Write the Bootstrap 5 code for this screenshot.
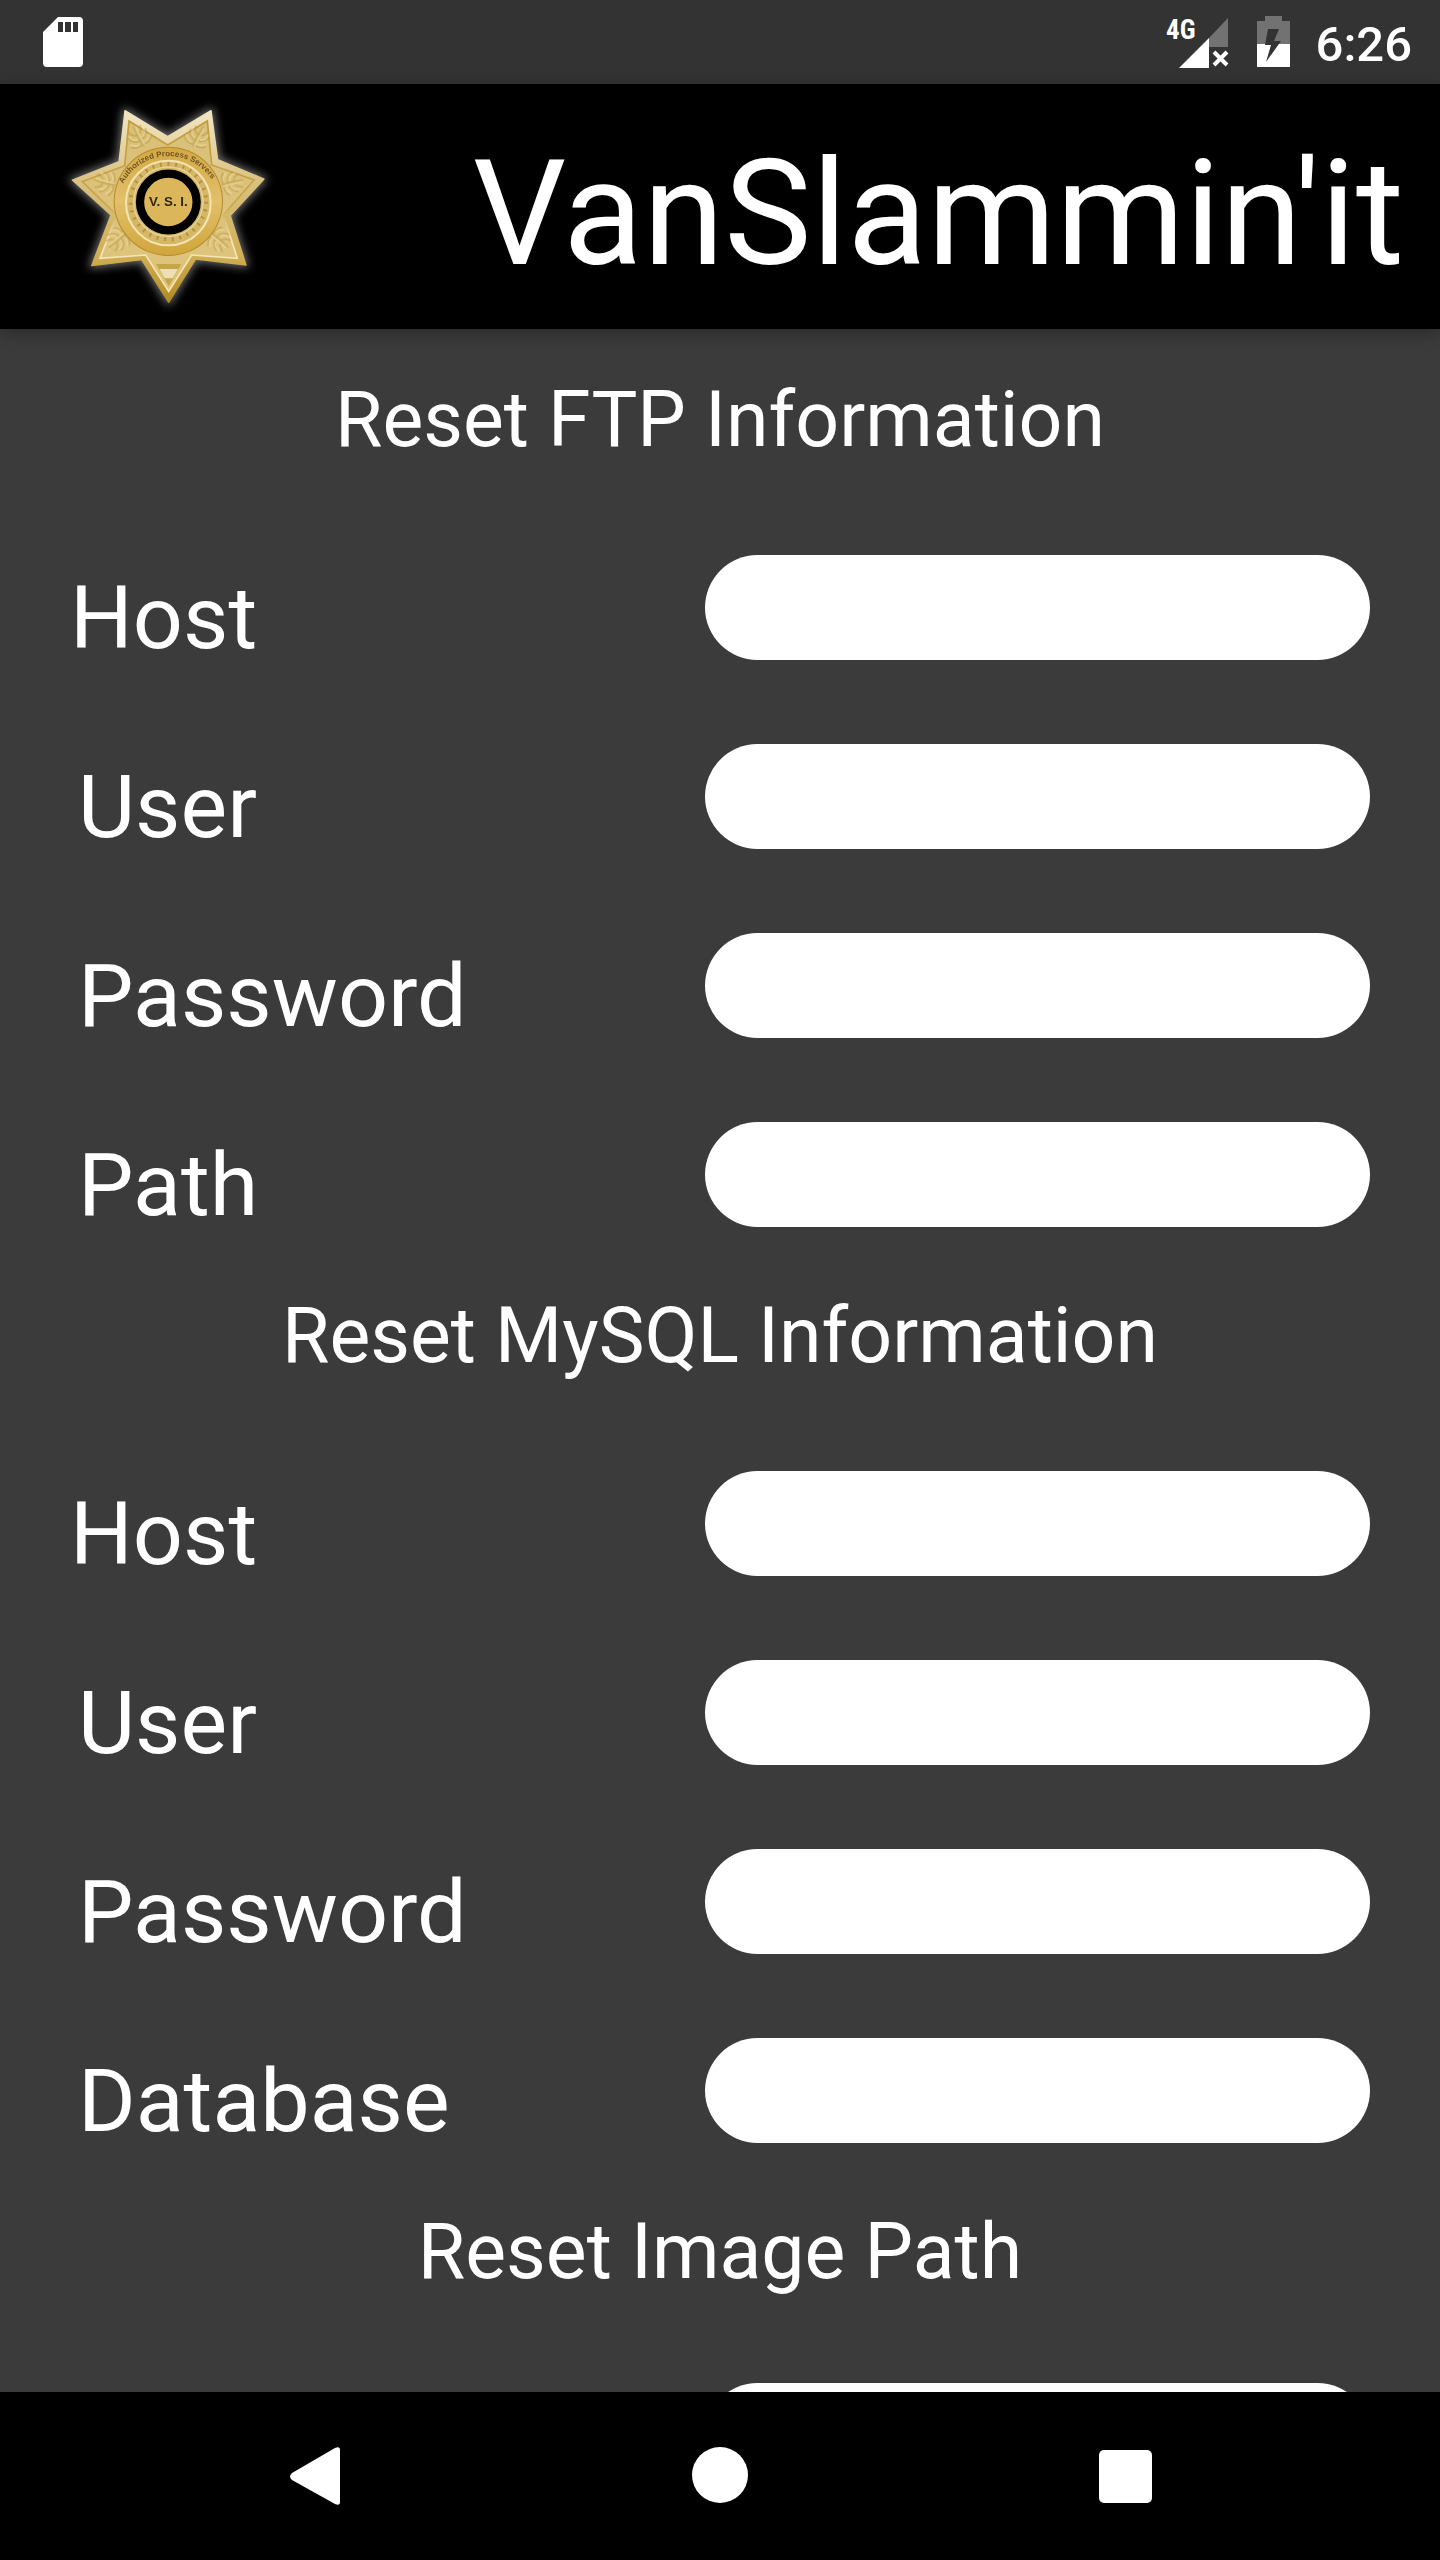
<!DOCTYPE html>
<html lang="en">
<head>
<meta charset="utf-8">
<meta name="viewport" content="width=device-width, initial-scale=1">
<title>VanSlammin'it</title>
<link href="https://cdn.jsdelivr.net/npm/bootstrap@5.3.0/dist/css/bootstrap.min.css" rel="stylesheet">
<style>
  body { font-family: Roboto, sans-serif; background: #3b3b3b; color: #fff; }
  .status-bar { height: 84px; background: #333; padding: 0 28px 0 40px; }
  .status-clock { font-size: 49px; line-height: 56px; font-weight: 500; padding-top: 5px; }
  .app-bar { height: 245px; background: #000; padding: 0 36px 0 50px; z-index: 2; box-shadow: 0 4px 16px rgba(0, 0, 0, .3); }
  .app-title { font-size: 147px; line-height: 176px; font-weight: 400; padding-top: 14px; }
  .settings { padding: 46px 70px 0; min-height: 0; }
  .form-section { display: flex; flex-direction: column; gap: 84px; margin-bottom: 64px; }
  .section-title { font-size: 77px; line-height: 90px; font-weight: 400; margin: 0 0 6px; text-align: center; }
  .section-tight .section-title { margin-bottom: 2px; }
  .field { display: grid; grid-template-columns: minmax(0, 635fr) minmax(0, 665fr); }
  .field-label { font-size: 88px; line-height: 84px; padding-top: 21px; }
  .field-label.inset { padding-left: 8px; }
  .field-input { grid-column: 2; width: 100%; height: 105px; font-size: 56px; padding: 0 48px; border: 0; background: #fff; }
  .nav-keys { height: 168px; background: #000; padding: 0 112px; z-index: 2; }
  .nav-key { background: none; border: 0; flex: 1 1 0; }
</style>
<script src="https://cdn.jsdelivr.net/npm/bootstrap@5.3.0/dist/js/bootstrap.bundle.min.js" defer></script>
</head>
<body class="d-flex flex-column vh-100 overflow-hidden">

<div class="status-bar d-flex align-items-center flex-shrink-0">
  <svg width="46" height="56" viewBox="0 0 46 56" class="me-auto" role="img" aria-label="SD card">
    <path fill="#fff" fill-rule="evenodd" d="M18 3H39Q43 3 43 7V49Q43 53 39 53H7Q3 53 3 49V18ZM18 8V18H23V8ZM25 8V18H31V8ZM33 8V18H38V8Z"/>
  </svg>
  <svg width="66" height="56" viewBox="1163 14 66 56" class="me-4" role="img" aria-label="4G, no data">
    <path fill="#727272" d="M1208 38L1227 18V47H1208Z"/>
    <path fill="#fff" d="M1178 68L1208 38V68Z"/>
    <path stroke="#fff" stroke-width="4" d="M1213 52L1226 65M1226 52L1213 65"/>
    <text x="1165" y="39" fill="#fff" font-family="Roboto Condensed, Liberation Sans Narrow, Roboto, sans-serif" font-weight="700" font-size="27">4G</text>
  </svg>
  <svg width="38" height="56" viewBox="1254 14 38 56" class="me-4" role="img" aria-label="Battery charging">
    <path fill="#727272" d="M1265 16H1282V21H1290V44H1257V21H1265Z"/>
    <path fill="#fff" d="M1257 44H1290V67H1257Z"/>
    <path fill="#333" d="M1268 29H1279L1274 41H1281L1266 62L1271 45H1265Z"/>
  </svg>
  <span class="status-clock">6:26</span>
</div>

<header class="app-bar d-flex align-items-center justify-content-between flex-shrink-0 position-relative">
  <svg width="240" height="240" viewBox="0 4 720 720" role="img" aria-label="VSI badge">
    <defs>
      <linearGradient id="rim" x1="0" y1="0" x2="0" y2="1">
        <stop offset="0" stop-color="#f2e6c4"/><stop offset=".4" stop-color="#d9bf7c"/>
        <stop offset=".75" stop-color="#d2b056"/><stop offset="1" stop-color="#b08a22"/>
      </linearGradient>
      <linearGradient id="face" x1="0" y1="0" x2="0" y2="1">
        <stop offset="0" stop-color="#d9c078"/><stop offset="1" stop-color="#dfc47c"/>
      </linearGradient>
      <linearGradient id="ring" x1="0" y1="0" x2="0" y2="1">
        <stop offset="0" stop-color="#d3a844"/><stop offset=".5" stop-color="#e2c06a"/><stop offset="1" stop-color="#d0a53c"/>
      </linearGradient>
      <linearGradient id="edge" x1="0" y1="0" x2="0" y2="1">
        <stop offset="0" stop-color="#c19c3c"/><stop offset=".5" stop-color="#c9a64c"/><stop offset=".7" stop-color="#f4e6b4"/><stop offset="1" stop-color="#f4e6b4"/>
      </linearGradient>
      <filter id="glow" x="-20%" y="-20%" width="140%" height="140%"><feGaussianBlur stdDeviation="14"/></filter>
      <path id="star" d="M225 75L353 153L483 75L503 222L642 280L541 390L588 538L437 520L356 650L275 522L125 540L183 388L67 283L207 228Z"/>
      <g id="leaf" fill="none" stroke-linecap="round">
        <path stroke="#b8933c" stroke-width="5" d="M0 30Q-4 0 0 -34M-3 12Q-26 8 -30 -10M3 12Q24 6 30 -12M-2 -6Q-18 -10 -20 -26M2 -6Q16 -12 20 -28M-4 26Q-22 30 -34 18M4 26Q22 28 34 16"/>
        <path stroke="#efe0ac" stroke-width="5" d="M5 26Q3 0 6 -30M-8 6Q-24 2 -24 -14M12 4Q26 -2 24 -18M-12 22Q-24 22 -32 10M12 20Q24 20 32 8"/>
      </g>
      <path id="arc" d="M219 294A154 154 0 0 1 500 312"/>
    </defs>
    <use href="#star" fill="#fff" stroke="#fff" stroke-width="14" opacity=".45" filter="url(#glow)"/>
    <use href="#star" fill="url(#rim)" stroke="url(#rim)" stroke-width="4" stroke-linejoin="round"/>
    <path fill="url(#face)" stroke="url(#edge)" stroke-width="5" d="M237 106L353 178L472 106L485 238L612 283L520 388L562 518L425 508L356 617L287 508L150 518L200 388L97 288L224 240Z"/>
    <g opacity=".5">
      <use href="#leaf" transform="translate(266 154) rotate(-28)"/>
      <use href="#leaf" transform="translate(443 154) rotate(28)"/>
      <use href="#leaf" transform="translate(166 291) rotate(-76)"/>
      <use href="#leaf" transform="translate(545 291) rotate(76)"/>
      <use href="#leaf" transform="translate(203 463) rotate(-130)"/>
      <use href="#leaf" transform="translate(508 463) rotate(130)"/>
    </g>
    <path fill="#c6a548" d="M318 535H394L356 602Z"/>
    <path fill="#eddfb2" d="M328 550H384L368 578H344Z"/>
    <circle cx="355" cy="347" r="164" fill="#b58b2c"/>
    <circle cx="355" cy="347" r="161" fill="url(#ring)"/>
    <circle cx="355" cy="352" r="127" fill="#d5b768" stroke="#f3e4b2" stroke-width="6"/>
    <circle cx="355" cy="348" r="113" fill="none" stroke="#b8933c" stroke-width="12" stroke-dasharray="6 17"/>
    <circle cx="355" cy="348" r="104" fill="none" stroke="#e7d396" stroke-width="4"/>
    <circle cx="355" cy="349" r="85" fill="#dcb65a" stroke="#000" stroke-width="25"/>
    <text font-family="Liberation Sans, sans-serif" font-weight="700" font-size="24" fill="#6c5320"><textPath href="#arc">Authorized Process Servers</textPath></text>
    <text x="355" y="362" text-anchor="middle" font-family="Liberation Sans, sans-serif" font-weight="700" font-size="40" fill="#2e250f">V. S. I.</text>
  </svg>
  <h1 class="app-title m-0">VanSlammin'it</h1>
</header>

<main class="settings flex-grow-1 overflow-hidden">
  <form>
    <section class="form-section">
      <h2 class="section-title">Reset FTP Information</h2>
      <div class="field"><label class="field-label" for="ftp-host">Host</label><input class="field-input rounded-pill" id="ftp-host" type="text"></div>
      <div class="field"><label class="field-label inset" for="ftp-user">User</label><input class="field-input rounded-pill" id="ftp-user" type="text"></div>
      <div class="field"><label class="field-label inset" for="ftp-password">Password</label><input class="field-input rounded-pill" id="ftp-password" type="password"></div>
      <div class="field"><label class="field-label inset" for="ftp-path">Path</label><input class="field-input rounded-pill" id="ftp-path" type="text"></div>
    </section>
    <section class="form-section">
      <h2 class="section-title">Reset MySQL Information</h2>
      <div class="field"><label class="field-label" for="sql-host">Host</label><input class="field-input rounded-pill" id="sql-host" type="text"></div>
      <div class="field"><label class="field-label inset" for="sql-user">User</label><input class="field-input rounded-pill" id="sql-user" type="text"></div>
      <div class="field"><label class="field-label inset" for="sql-password">Password</label><input class="field-input rounded-pill" id="sql-password" type="password"></div>
      <div class="field"><label class="field-label inset" for="sql-database">Database</label><input class="field-input rounded-pill" id="sql-database" type="text"></div>
    </section>
    <section class="form-section section-tight">
      <h2 class="section-title" id="image-title">Reset Image Path</h2>
      <div class="field"><input class="field-input rounded-pill" type="text" aria-labelledby="image-title"></div>
    </section>
  </form>
</main>

<nav class="nav-keys d-flex flex-shrink-0 position-relative" aria-label="System">
  <button class="nav-key" type="button" aria-label="Back">
    <svg width="60" height="60" viewBox="0 0 60 60"><path fill="#fff" d="M7 27L50 2Q55 0 55 4V56Q55 60 50 58L7 34Q3 30.500 7 27Z"/></svg>
  </button>
  <button class="nav-key" type="button" aria-label="Home">
    <svg width="60" height="60" viewBox="0 0 60 60"><circle cx="30" cy="29" r="28" fill="#fff"/></svg>
  </button>
  <button class="nav-key" type="button" aria-label="Recent apps">
    <svg width="60" height="60" viewBox="0 0 60 60"><rect x="4" y="4" width="53" height="53" rx="5" fill="#fff"/></svg>
  </button>
</nav>
</body>
</html>
